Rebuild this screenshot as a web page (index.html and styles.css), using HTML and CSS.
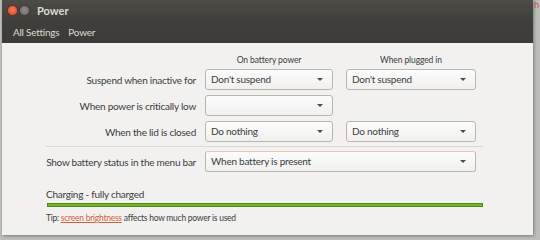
FILE: index.html
```html
<!DOCTYPE html>
<html lang="en">
<head>
  <meta charset="UTF-8" />
  <title>Power</title>
  <link rel="stylesheet" href="styles.css">
</head>
<body>
  <span class="desk-text">h</span>
  <div class="window">
    <div class="titlebar">
      <span class="wbtn close"></span>
      <span class="wbtn min"></span>
      <span class="title">Power</span>
    </div>
    <div class="toolbar">
      <span>All Settings</span>
      <span>Power</span>
    </div>

    <div class="content">
      <div class="grid">
        <div></div>
        <div class="colhead">On battery power</div>
        <div class="colhead plugged">When plugged in</div>

        <div class="label">Suspend when inactive for</div>
        <div class="combo">Don't suspend</div>
        <div class="combo plugged">Don't suspend</div>

        <div class="label">When power is critically low</div>
        <div class="combo"></div>
        <div></div>

        <div class="label">When the lid is closed</div>
        <div class="combo">Do nothing</div>
        <div class="combo plugged">Do nothing</div>
      </div>

      <div class="sep"></div>

      <div class="grid single">
        <div class="label">Show battery status in the menu bar</div>
        <div class="combo wide focus">When battery is present</div>
      </div>

      <div class="status">Charging - fully charged</div>
      <div class="bar"></div>
      <div class="tip">Tip: <a href="#">screen brightness</a> affects how much power is used</div>
    </div>
  </div>
</body>
</html>
```

FILE: styles.css
```css
* {
  box-sizing: border-box;
}
body {
  margin: 0;
  width: 540px;
  height: 240px;
  overflow: hidden;
  background: #bdbdbb;
  font-family: 'Lato', 'Liberation Sans', sans-serif;
  color: #3c3c3c;
  position: relative;
}
.desk-text {
  position: absolute;
  right: 1px;
  top: 0;
  font-size: 9px;
  line-height: 10px;
  color: #c0504a;
}
.window {
  margin-left: 2px;
  width: 531px;
  height: 235px;
  background: #f2f1f0;
  box-shadow: 1px 1px 3px rgba(0,0,0,0.35);
}
.titlebar {
  height: 20px;
  display: flex;
  align-items: center;
  padding-left: 5px;
  background: linear-gradient(#4d4c47, #403f3b);
}
.wbtn {
  width: 11px;
  height: 11px;
  border-radius: 50%;
  margin-right: 1px;
}
.wbtn.close {
  background: radial-gradient(circle at 50% 40%, #f27a58, #d94a25);
  border: 1px solid #6b3020;
}
.wbtn.min {
  background: radial-gradient(circle at 50% 40%, #8b8a85, #6d6c67);
  border: 1px solid #3a3935;
}
.title {
  margin-left: 6px;
  font-weight: 700;
  font-size: 11px;
  color: #dfdbd2;
}
.toolbar {
  height: 23px;
  display: flex;
  align-items: center;
  gap: 9px;
  padding-left: 11px;
  font-size: 10px;
  letter-spacing: -0.25px;
  color: #dfdbd2;
  background: linear-gradient(#403f3b, #3c3b37);
}
.content {
  font-size: 10px;
  letter-spacing: -0.25px;
}
.grid {
  display: grid;
  grid-template-columns: 194px 128px 134px;
  column-gap: 9px;
  row-gap: 5px;
  padding-top: 10px;
  align-items: center;
}
.grid.single {
  padding-top: 0;
  margin-top: 4px;
}
.colhead {
  text-align: center;
  font-size: 8.5px;
  letter-spacing: -0.1px;
  line-height: 14px;
  margin-bottom: -3px;
}
.plugged {
  margin-left: 4px;
}
.label {
  text-align: right;
}
.combo {
  height: 21px;
  line-height: 19px;
  padding-left: 5px;
  border: 1px solid #b9b6ae;
  border-radius: 3px;
  background: linear-gradient(#fcfcfc, #f1f0ef);
  position: relative;
}
.combo::after {
  content: "";
  position: absolute;
  right: 9px;
  top: 8px;
  border-left: 3px solid transparent;
  border-right: 3px solid transparent;
  border-top: 3px solid #4c4c4c;
}
.combo.wide {
  grid-column: span 2;
}
.combo.focus {
  border-top-color: #e9c4b4;
}
.sep {
  margin: 4px 50px 0 44px;
  height: 1px;
  background: #dad8d3;
}
.status {
  margin: 15px 0 0 44px;
  line-height: 14px;
}
.bar {
  margin: 2px 50px 0 45px;
  height: 4px;
  border: 1px solid #4d8a14;
  background: #79b52c;
}
.tip {
  margin: 5px 0 0 44px;
  font-size: 8.5px;
  letter-spacing: -0.25px;
  line-height: 12px;
}
.tip a {
  color: #d4603a;
}
```
